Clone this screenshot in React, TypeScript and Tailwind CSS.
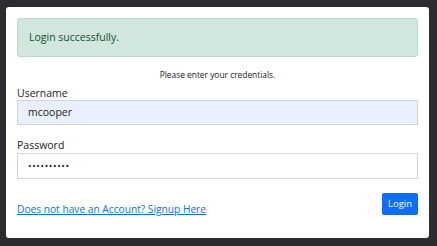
import React from "react";

export default function App() {
  return (
    <div
      className="w-[437px] h-[246px] bg-[#2b2d31] pt-[7px] pl-[6px]"
      style={{ fontFamily: '"Open Sans", "Noto Sans", sans-serif' }}
    >
      <div className="w-[423px] h-[231px] bg-white rounded-[3px] px-[11px] pt-[11px] flex flex-col">
        <div className="h-[39px] bg-[#d1e7dd] border border-[#badbcc] rounded-[3px] flex items-center pl-[11px] text-[#0f5132] text-[10.5px]">
          Login successfully.
        </div>
        <div className="mt-[12px] text-center text-[8.4px] text-[#222] leading-[12px]">
          Please enter your credentials.
        </div>
        <div className="mt-[5px] text-[10.5px] text-[#222] leading-[14px]">Username</div>
        <div className="mt-[0px] h-[25px] bg-[#e8f0fe] border border-[#cfd4da] flex items-center pl-[10px] text-[10.5px] text-[#222]">
          mcooper
        </div>
        <div className="mt-[13px] text-[10.5px] text-[#222] leading-[14px]">Password</div>
        <div className="mt-[1px] h-[26px] bg-white border border-[#cfd4da] flex items-center pl-[10px] text-[9.5px] tracking-[0.6px] text-[#222]">
          ••••••••••
        </div>
        <div className="mt-[14px] flex justify-between items-start">
          <a
            href="#"
            className="mt-[9px] text-[10.2px] text-[#0d6efd] underline leading-[14px]"
          >
            Does not have an Account? Signup Here
          </a>
          <button className="w-[36px] h-[22px] bg-[#0d6efd] text-white text-[9.5px] rounded-[2px] flex items-center justify-center">
            Login
          </button>
        </div>
      </div>
    </div>
  );
}
